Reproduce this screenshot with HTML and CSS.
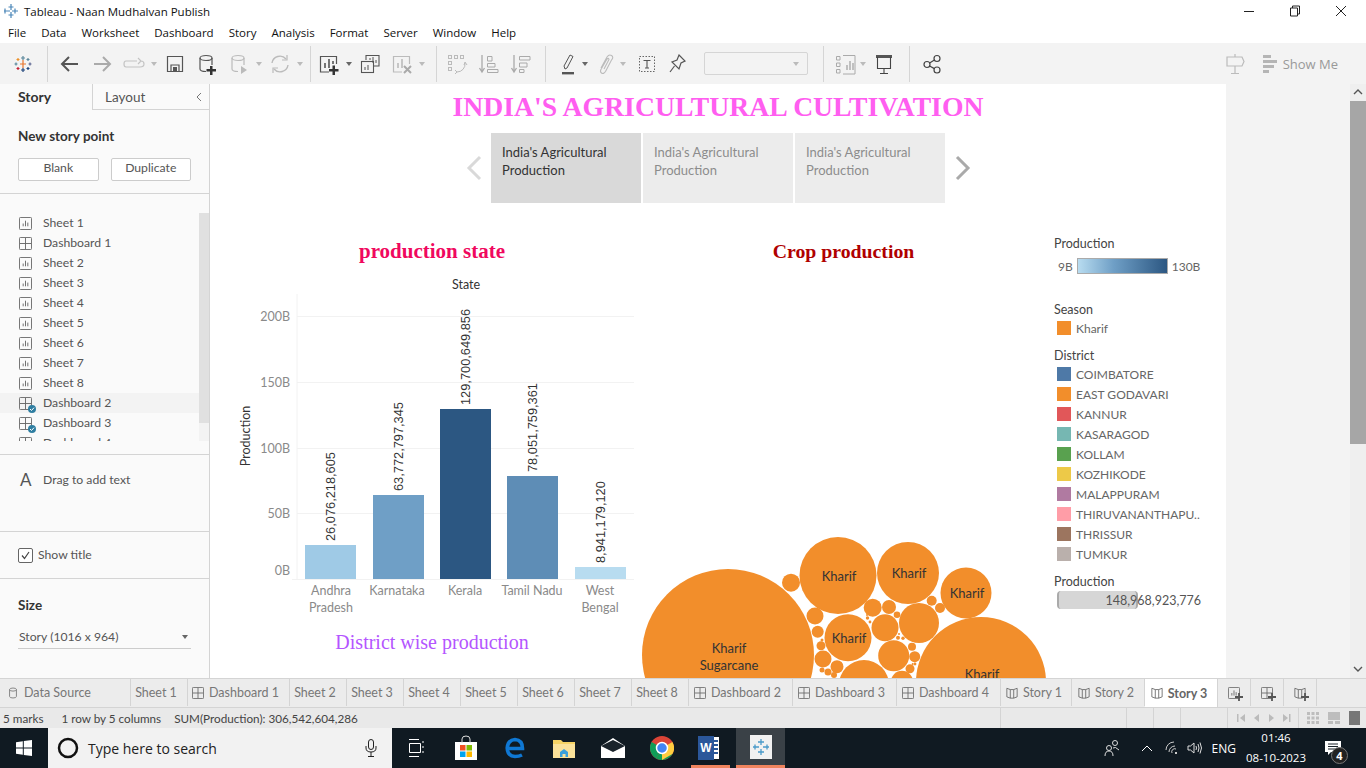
FILE: index.html
```html
<!DOCTYPE html>
<html lang="en">
<head>
  <meta charset="UTF-8">
  <title>Tableau - Naan Mudhalvan Publish</title>
  <link rel="stylesheet" href="styles.css">
</head>
<body>
<svg class="defs">
  <symbol id="i-sheet" viewBox="0 0 14 14"><rect x="0.5" y="0.5" width="13" height="13" rx="1" fill="none" stroke="#666"/><path d="M4.5 10V7M7 10V4M9.5 10V6" stroke="#666" fill="none"/></symbol>
  <symbol id="i-dash" viewBox="0 0 14 14"><rect x="0.5" y="0.5" width="13" height="13" rx="1" fill="none" stroke="#666"/><path d="M7 1V13M1 7H13" stroke="#666" fill="none"/></symbol>
  <symbol id="i-story" viewBox="0 0 14 14"><path d="M1 1.5L5 3V13L1 11.5ZM13 1.5L9 3V13L13 11.5ZM5 3H9M5 13H9" fill="none" stroke="#666"/></symbol>
  <symbol id="i-check" viewBox="0 0 8 8"><circle cx="4" cy="4" r="4" fill="#2f7ea1"/><path d="M2 4L3.5 5.5L6 2.7" stroke="#fff" fill="none"/></symbol>
  <symbol id="i-caret" viewBox="0 0 10 6"><path d="M2 1H8L5 5Z"/></symbol>
  <symbol id="i-plus" viewBox="0 0 9 9"><path d="M3.5 0H5.5V3.5H9V5.5H5.5V9H3.5V5.5H0V3.5H3.5Z"/></symbol>
</svg>

<div class="titlebar">
  <svg class="app-logo" width="16" height="16" viewBox="0 0 16 16"><g stroke="#4a86b8" stroke-width="1.2"><path d="M8 1V7M5.5 4H10.5M8 9V15M5.5 12H10.5M1 8H7M2 5.5V10.5M9 8H15M12 5.5V10.5"/></g></svg>
  <span class="app-title">Tableau - Naan Mudhalvan Publish</span>
  <div class="winbtns">
    <svg width="12" height="12" viewBox="0 0 12 12"><path d="M1 6.5H11" stroke="#222"/></svg>
    <svg width="12" height="12" viewBox="0 0 12 12"><path d="M3.5 3V1H10.5V9H8.5M1.5 3H8.5V11H1.5Z" fill="none" stroke="#222"/></svg>
    <svg width="12" height="12" viewBox="0 0 12 12"><path d="M1 1L11 11M11 1L1 11" stroke="#222"/></svg>
  </div>
</div>

<div class="menubar">
  <span>File</span><span>Data</span><span>Worksheet</span><span>Dashboard</span><span>Story</span><span>Analysis</span><span>Format</span><span>Server</span><span>Window</span><span>Help</span>
</div>

<div class="toolbar">
  <div class="g-logo">
    <svg class="ic" viewBox="0 0 24 24"><g stroke-width="1.2" fill="none"><path d="M12 8V16M9 12H15" stroke="#e8762d"/><path d="M12 4V8M10 6H14" stroke="#5b879b"/><path d="M12 16V20M10 18H14" stroke="#1f447b"/><path d="M5 10.500V13.500M3.500 12H6.500" stroke="#59879b"/><path d="M19 10.500V13.500M17.500 12H20.500" stroke="#5b6591"/><path d="M7 6V9M5.500 7.500H8.500" stroke="#eb912b"/><path d="M17 6V9M15.500 7.500H18.500" stroke="#5b879b"/><path d="M7 15V18M5.500 16.500H8.500" stroke="#c72035"/><path d="M17 15V18M15.500 16.500H18.500" stroke="#1f447b"/></g></svg>
  </div>
  <div class="g-nav">
    <svg class="ic" viewBox="0 0 24 24"><path d="M20 12H5M11 5L4 12L11 19" fill="none" stroke="#555" stroke-width="2"/></svg>
    <svg class="ic dim" viewBox="0 0 24 24"><path d="M4 12H19M13 5L20 12L13 19" fill="none" stroke="#aaa" stroke-width="2"/></svg>
    <svg class="ic dim" viewBox="0 0 24 24"><path d="M15 9H4Q2 9 2 12T4 15H18Q22 15 22 12T19 9M16 6L19 9L16 12" fill="none" stroke="#c4c4c4" stroke-width="1.2"/></svg>
    <svg class="caret dim"><use href="#i-caret"/></svg>
    <svg class="ic" viewBox="0 0 24 24"><path d="M4.500 4.500H19.500V19.500H4.500ZM8 19V13H16V19" fill="none" stroke="#555" stroke-width="1.2"/><rect x="10" y="15" width="4" height="4" fill="#555"/></svg>
    <svg class="ic" viewBox="0 0 24 24"><ellipse cx="11" cy="6" rx="6" ry="2.5" fill="none" stroke="#555" stroke-width="1.2"/><path d="M5 6V17Q5 19.5 11 19.5M17 6V13" fill="none" stroke="#555" stroke-width="1.2"/><path d="M15 14H17.500V17H21V19.500H17.500V23H15V19.500H11.500V17H15Z" fill="#333"/></svg>
    <svg class="ic dim" viewBox="0 0 24 24"><ellipse cx="11" cy="6" rx="6" ry="2.5" fill="none" stroke="#bbb" stroke-width="1.2"/><path d="M5 6V17Q5 19.5 11 19.5M17 6V13" fill="none" stroke="#bbb" stroke-width="1.2"/><path d="M14 14L20 18L14 22Z" fill="#bbb"/></svg>
    <svg class="caret dim"><use href="#i-caret"/></svg>
    <svg class="ic dim" viewBox="0 0 24 24"><path d="M4 11A8 8 0 0 1 18 7M20 13A8 8 0 0 1 6 17" fill="none" stroke="#bbb" stroke-width="1.4"/><path d="M19 3V8H14M5 21V16H10" fill="none" stroke="#bbb" stroke-width="1.2"/></svg>
    <svg class="caret dim"><use href="#i-caret"/></svg>
  </div>
  <div class="g-sheet">
    <svg class="ic" viewBox="0 0 24 24"><path d="M12 20H3.500V4.500H19.500V12" fill="none" stroke="#555" stroke-width="1.2"/><path d="M8 16V11M12 16V7M16 12V9" stroke="#555" stroke-width="1.6"/><path d="M15.500 13.500H18V17H21.500V19.500H18V23H15.500V19.500H12V17H15.500Z" fill="#333"/></svg>
    <svg class="caret"><use href="#i-caret"/></svg>
    <svg class="ic" viewBox="0 0 24 24"><path d="M8 8V3.500H21V14H16" fill="none" stroke="#555" stroke-width="1.1"/><rect x="3.500" y="9.500" width="12" height="11" fill="#f3f3f3" stroke="#555" stroke-width="1.1"/><path d="M12 8V6M15 11V5M18 11V8M7 18V15M10 18V13" stroke="#555"/></svg>
    <svg class="ic dim" viewBox="0 0 24 24"><path d="M12 20H3.500V4.500H19.500V12" fill="none" stroke="#bbb" stroke-width="1.2"/><path d="M8 16V11M12 16V7" stroke="#bbb" stroke-width="1.6"/><path d="M14 14L21 21M21 14L14 21" stroke="#aaa" stroke-width="2"/></svg>
    <svg class="caret dim"><use href="#i-caret"/></svg>
  </div>
  <div class="g-sort">
    <svg class="ic dim" viewBox="0 0 24 24"><g fill="none" stroke="#bbb"><rect x="3.500" y="3.500" width="3" height="3"/><rect x="9.500" y="3.500" width="3" height="3"/><rect x="15.500" y="3.500" width="3" height="3"/><rect x="3.500" y="9.500" width="3" height="3"/><rect x="3.500" y="15.500" width="3" height="3"/><path d="M20 11A8 8 0 0 1 12 20M10 18L12 20L10 22M19 13L20 10L22 13"/></g></svg>
    <svg class="ic dim" viewBox="0 0 24 24"><path d="M5 3V19M2.500 16L5 20L7.500 16" fill="none" stroke="#aaa" stroke-width="1.3"/><path d="M10.500 4.500H15V9H10.500ZM10.500 11.500H18V15H10.500ZM10.500 17.500H21V20.500H10.500Z" fill="none" stroke="#aaa"/></svg>
    <svg class="ic dim" viewBox="0 0 24 24"><path d="M5 3V19M2.500 16L5 20L7.500 16" fill="none" stroke="#aaa" stroke-width="1.3"/><path d="M10.500 4.500H21V8H10.500ZM10.500 11H18V15H10.500ZM10.500 17.500H15V20.500H10.500Z" fill="none" stroke="#aaa"/></svg>
  </div>
  <div class="g-mark">
    <svg class="ic" viewBox="0 0 24 24"><path d="M9 17L8 14L14 3L17 4.500L11 16Z" fill="none" stroke="#555"/><rect x="6" y="20" width="12" height="2.4" fill="#555"/></svg>
    <svg class="caret"><use href="#i-caret"/></svg>
    <svg class="ic dim" viewBox="0 0 24 24"><path d="M7 16L13 5Q15 2 17.500 3.500T17.500 8L11.500 19.500Q9.500 22.500 7.500 21T7.500 16.500L13 7Q14.500 5.500 15 7.500L10 17" fill="none" stroke="#bbb" stroke-width="1.1"/></svg>
    <svg class="caret dim"><use href="#i-caret"/></svg>
    <svg class="ic ic-t" viewBox="0 0 24 24"><rect x="4.500" y="4.500" width="15" height="15" fill="none" stroke="#666" stroke-dasharray="1.5 1.5"/><path d="M8.500 8.500H15.500M12 8.500V16M10 16H14" fill="none" stroke="#555" stroke-width="1.1"/></svg>
    <svg class="ic ic-pin" viewBox="0 0 24 24"><path d="M14 3L20 9L16 11L14 17L7 10L12 8ZM9.500 14L5 20" fill="none" stroke="#555" stroke-width="1.2"/></svg>
    <div class="tb-select"><svg class="caret dim"><use href="#i-caret"/></svg></div>
  </div>
  <div class="g-show">
    <svg class="ic dim" viewBox="0 0 24 24"><path d="M9 3.500H21V22H9" fill="none" stroke="#aaa"/><path d="M13 18V13M16 18V9M19 18V11" stroke="#aaa" stroke-width="1.4"/><path d="M2.500 4.500H6V8H2.500ZM2.500 11H6V14.500H2.500ZM2.500 17.500H6V21H2.500Z" fill="none" stroke="#aaa"/></svg>
    <svg class="caret dim"><use href="#i-caret"/></svg>
    <svg class="ic" viewBox="0 0 24 24"><rect x="4" y="3" width="16" height="3" fill="#555"/><path d="M5.500 5V16.500H18.500V5M12 16.500V21.500M8 21.500H16" fill="none" stroke="#444" stroke-width="1.1"/></svg>
  </div>
  <div class="g-share">
    <svg class="ic" viewBox="0 0 24 24"><g fill="none" stroke="#444" stroke-width="1.2"><circle cx="17" cy="6.500" r="3"/><circle cx="7" cy="12.500" r="3"/><circle cx="17" cy="18" r="3"/><path d="M9.600 11L14.400 8M9.600 14L14.400 16.600"/></g></svg>
  </div>
  <div class="g-right">
    <svg class="ic" viewBox="0 0 24 24"><path d="M12 2V5M4 5H19L21 9.500L19 14H4ZM12 14V21M8 21.500H16" fill="none" stroke="#bbb" stroke-width="1.2"/></svg>
    <svg class="showme-ic" width="14" height="24" viewBox="0 0 14 24"><path d="M0 3H8V6H0ZM0 8H14V11H0ZM0 13H11V16H0ZM0 18H6V21H0Z" fill="#b5b5b5"/></svg>
    <span class="showme">Show Me</span>
  </div>
</div>

<div class="main">
  <aside class="sidebar">
    <div class="side-tabs">
      <span class="side-tab active">Story</span>
      <span class="side-tab">Layout</span>
      <svg class="collapse" width="8" height="10" viewBox="0 0 8 10"><path d="M6 1L2 5L6 9" fill="none" stroke="#777"/></svg>
    </div>
    <section class="sec-new">
      <h4>New story point</h4>
      <div class="btn-row"><span class="btn">Blank</span><span class="btn">Duplicate</span></div>
    </section>
    <section class="sec-list">
      <ul class="sheet-list">
        <li><svg><use href="#i-sheet"/></svg><span>Sheet 1</span></li>
        <li><svg><use href="#i-dash"/></svg><span>Dashboard 1</span></li>
        <li><svg><use href="#i-sheet"/></svg><span>Sheet 2</span></li>
        <li><svg><use href="#i-sheet"/></svg><span>Sheet 3</span></li>
        <li><svg><use href="#i-sheet"/></svg><span>Sheet 4</span></li>
        <li><svg><use href="#i-sheet"/></svg><span>Sheet 5</span></li>
        <li><svg><use href="#i-sheet"/></svg><span>Sheet 6</span></li>
        <li><svg><use href="#i-sheet"/></svg><span>Sheet 7</span></li>
        <li><svg><use href="#i-sheet"/></svg><span>Sheet 8</span></li>
        <li class="hover"><svg><use href="#i-dash"/></svg><svg class="badge"><use href="#i-check"/></svg><span>Dashboard 2</span></li>
        <li><svg><use href="#i-dash"/></svg><svg class="badge"><use href="#i-check"/></svg><span>Dashboard 3</span></li>
        <li><svg><use href="#i-dash"/></svg><span>Dashboard 4</span></li>
      </ul>
      <div class="list-scroll"><div class="list-thumb"></div></div>
    </section>
    <section class="sec-text"><span class="big-a">A</span>Drag to add text</section>
    <section class="sec-show"><span class="checkbox"><svg width="11" height="11" viewBox="0 0 11 11"><path d="M2 5.500L4.500 8.500L9 2" fill="none" stroke="#444" stroke-width="1.2"/></svg></span><span class="show-lbl">Show title</span></section>
    <section class="sec-size">
      <h4>Size</h4>
      <div class="size-select">Story (1016 x 964)<svg class="caret"><use href="#i-caret"/></svg></div>
    </section>
  </aside>

  <div class="canvas">
    <h1 class="story-title">INDIA'S AGRICULTURAL CULTIVATION</h1>
    <div class="story-nav">
      <svg class="nav-arrow" width="16" height="26" viewBox="0 0 16 26"><path d="M14 2L3 13L14 24" fill="none" stroke="#d9d9d9" stroke-width="3"/></svg>
      <div class="point current">India's Agricultural Production</div>
      <div class="point">India's Agricultural Production</div>
      <div class="point">India's Agricultural Production</div>
      <svg class="nav-arrow" width="16" height="26" viewBox="0 0 16 26"><path d="M2 2L13 13L2 24" fill="none" stroke="#aaa" stroke-width="3"/></svg>
    </div>
    <div class="story-body">
      <div class="col-left">
        <h2 class="head-state">production state</h2>
        <svg class="bar-chart" width="410" height="350" viewBox="230 270 410 350">
          <g stroke="#f2f2f2"><path d="M297 316.500H634M297 382.500H634M297 448.500H634M297 513.500H634M297 294V579M292 579.500H634"/></g>
          <g fill="#8a8a8a" class="axis-txt" text-anchor="end">
            <text x="290" y="321">200B</text><text x="290" y="387">150B</text><text x="290" y="453">100B</text><text x="290" y="518">50B</text><text x="290" y="575">0B</text>
          </g>
          <text class="axis-title" x="466" y="289" text-anchor="middle">State</text>
          <text class="axis-title" transform="translate(250 436) rotate(-90)" text-anchor="middle">Production</text>
          <rect x="305" y="545" width="51" height="34" fill="#9fcae6"/>
          <rect x="373" y="495" width="51" height="84" fill="#6f9fc6"/>
          <rect x="440" y="409" width="51" height="170" fill="#2c5782"/>
          <rect x="507" y="476" width="51" height="103" fill="#5e8db6"/>
          <rect x="575" y="567" width="51" height="12" fill="#b8dcf0"/>
          <g class="val-txt">
            <text transform="translate(335 541) rotate(-90)">26,076,218,605</text>
            <text transform="translate(403 491) rotate(-90)">63,772,797,345</text>
            <text transform="translate(470 405) rotate(-90)">129,700,649,856</text>
            <text transform="translate(537 472) rotate(-90)">78,051,759,361</text>
            <text transform="translate(605 563) rotate(-90)">8,941,179,120</text>
          </g>
          <g class="axis-txt" fill="#8a8a8a" text-anchor="middle">
            <text x="331" y="595">Andhra</text><text x="331" y="612">Pradesh</text>
            <text x="397" y="595">Karnataka</text>
            <text x="465" y="595">Kerala</text>
            <text x="532" y="595">Tamil Nadu</text>
            <text x="600" y="595">West</text><text x="600" y="612">Bengal</text>
          </g>
        </svg>
        <h2 class="head-district">District wise production</h2>
      </div>
      <div class="col-mid">
        <h2 class="head-crop">Crop production</h2>
        <svg class="bubbles" width="410" height="148" viewBox="640 530 410 148">
          <g fill="#f28e2b">
            <circle cx="728" cy="655" r="86"/><circle cx="838" cy="575.500" r="38.500"/><circle cx="908" cy="573" r="31"/><circle cx="966" cy="593" r="25.500"/><circle cx="981" cy="682" r="65"/>
            <circle cx="791" cy="582.700" r="9"/><circle cx="815" cy="616" r="8.500"/><circle cx="817.700" cy="631.700" r="6"/><circle cx="848" cy="637.700" r="23.500"/><circle cx="872.700" cy="607.700" r="9"/><circle cx="889" cy="607" r="7"/><circle cx="897" cy="614.700" r="3.300"/><circle cx="885" cy="627.700" r="13.500"/><circle cx="919" cy="623" r="20"/><circle cx="931.700" cy="600.700" r="5"/><circle cx="940" cy="608" r="5"/><circle cx="893.700" cy="655.700" r="15.500"/><circle cx="912" cy="646.700" r="4"/><circle cx="914.700" cy="656.700" r="5.500"/><circle cx="910" cy="668.700" r="4.500"/><circle cx="821" cy="645.700" r="4.500"/><circle cx="823" cy="659" r="8.500"/><circle cx="837" cy="666.700" r="6.500"/><circle cx="828" cy="672" r="3.500"/><circle cx="822" cy="670" r="2.500"/><circle cx="864" cy="685" r="25"/><circle cx="902" cy="681.700" r="11"/><circle cx="834" cy="675" r="3"/>
            <circle cx="867.500" cy="618" r="1.700"/><circle cx="870" cy="622" r="1.400"/><circle cx="867" cy="615" r="1"/><circle cx="898" cy="637.700" r="2"/><circle cx="903" cy="638.300" r="1.700"/><circle cx="899" cy="634" r="1"/><circle cx="915" cy="664" r="1.400"/><circle cx="912.700" cy="664" r="1"/><circle cx="822" cy="640" r="1.500"/>
          </g>
          <g class="bubble-txt" text-anchor="middle">
            <text x="729" y="653">Kharif</text><text x="729" y="670">Sugarcane</text>
            <text x="839" y="581">Kharif</text><text x="909" y="578">Kharif</text><text x="967" y="598">Kharif</text><text x="849" y="643">Kharif</text><text x="982" y="679">Kharif</text>
          </g>
        </svg>
      </div>
      <div class="legends">
        <h5>Production</h5>
        <div class="ramp-row"><span class="ramp-lo">9B</span><span class="ramp"></span><span>130B</span></div>
        <h5 class="leg-season">Season</h5>
        <div class="leg-item"><i class="c-orange"></i>Kharif</div>
        <h5 class="leg-district">District</h5>
        <div class="leg-item"><i class="c-blue"></i>COIMBATORE</div>
        <div class="leg-item"><i class="c-orange"></i>EAST GODAVARI</div>
        <div class="leg-item"><i class="c-red"></i>KANNUR</div>
        <div class="leg-item"><i class="c-teal"></i>KASARAGOD</div>
        <div class="leg-item"><i class="c-green"></i>KOLLAM</div>
        <div class="leg-item"><i class="c-yellow"></i>KOZHIKODE</div>
        <div class="leg-item"><i class="c-purple"></i>MALAPPURAM</div>
        <div class="leg-item"><i class="c-pink"></i>THIRUVANANTHAPU..</div>
        <div class="leg-item"><i class="c-brown"></i>THRISSUR</div>
        <div class="leg-item"><i class="c-grey"></i>TUMKUR</div>
        <h5 class="leg-prod">Production</h5>
        <div class="size-bar"><span class="size-fill"></span><span class="size-val">148,968,923,776</span></div>
      </div>
    </div>
  </div>

  <div class="gutter"></div>
  <div class="vscroll">
    <svg width="16" height="16" viewBox="0 0 16 16"><path d="M4 10L8 6L12 10" fill="none" stroke="#555" stroke-width="1.4"/></svg>
    <div class="vthumb"></div>
    <svg class="vdown" width="16" height="16" viewBox="0 0 16 16"><path d="M4 6L8 10L12 6" fill="none" stroke="#555" stroke-width="1.4"/></svg>
  </div>
</div>

<div class="tabs">
  <span class="tab t-source"><svg viewBox="0 0 14 14"><ellipse cx="7" cy="3" rx="4" ry="1.8" fill="none" stroke="#777"/><path d="M3 3V11Q3 12.800 7 12.800T11 11V3" fill="none" stroke="#777"/></svg>Data Source</span>
  <span class="tab t-57">Sheet 1</span>
  <span class="tab t-dash t-d1"><svg><use href="#i-dash"/></svg>Dashboard 1</span>
  <span class="tab t-57">Sheet 2</span>
  <span class="tab t-57">Sheet 3</span>
  <span class="tab t-57">Sheet 4</span>
  <span class="tab t-57">Sheet 5</span>
  <span class="tab t-57">Sheet 6</span>
  <span class="tab t-57">Sheet 7</span>
  <span class="tab t-57">Sheet 8</span>
  <span class="tab t-dash"><svg><use href="#i-dash"/></svg>Dashboard 2</span>
  <span class="tab t-dash"><svg><use href="#i-dash"/></svg>Dashboard 3</span>
  <span class="tab t-dash"><svg><use href="#i-dash"/></svg>Dashboard 4</span>
  <span class="tab t-story"><svg><use href="#i-story"/></svg>Story 1</span>
  <span class="tab t-cur-b"><svg><use href="#i-story"/></svg>Story 2</span>
  <span class="tab t-cur"><svg><use href="#i-story"/></svg>Story 3</span>
  <span class="tab t-add"><svg><use href="#i-sheet"/></svg><svg class="add-plus"><use href="#i-plus"/></svg></span>
  <span class="tab t-add"><svg><use href="#i-dash"/></svg><svg class="add-plus"><use href="#i-plus"/></svg></span>
  <span class="tab t-add"><svg><use href="#i-story"/></svg><svg class="add-plus"><use href="#i-plus"/></svg></span>
</div>

<div class="status">
  <span class="st-marks">5 marks</span><span class="st-rows">1 row by 5 columns</span><span class="st-sum">SUM(Production): 306,542,604,286</span>
  <div class="st-cells">
    <span class="cell w126"></span><span class="cell w27"></span><span class="cell w27"></span><span class="cell w47"></span>
    <span class="cell st-pager">
      <svg width="60" height="12" viewBox="0 0 60 12"><g fill="#bbb"><path d="M3 2H4.500V10H3ZM11 2V10L6 6ZM25 2V10L20 6ZM35 2L40 6L35 10ZM49 2L54 6L49 10ZM55 2H56.500V10H55Z"/></g></svg>
    </span>
    <span class="st-views">
      <svg width="12" height="12" viewBox="0 0 12 12"><path d="M0 0H3V3H0ZM4.500 0H7.500V3H4.500ZM9 0H12V3H9ZM0 4.500H3V7.500H0ZM4.500 4.500H7.500V7.500H4.500ZM9 4.500H12V7.500H9ZM0 9H3V12H0ZM4.500 9H7.500V12H4.500ZM9 9H12V12H9Z" fill="#bdbdbd"/></svg>
      <svg width="12" height="12" viewBox="0 0 12 12"><path d="M0 0H12V8H0ZM0 9H5V12H0ZM7 9H12V12H7Z" fill="#bdbdbd"/></svg>
      <svg width="12" height="14" viewBox="0 0 12 14"><rect width="11" height="14" fill="#777"/></svg>
    </span>
  </div>
</div>

<div class="taskbar">
  <svg class="tk-win" width="16" height="16" viewBox="0 0 16 16"><path d="M0 2.200L6.800 1.200V7.500H0ZM7.800 1L16 0V7.500H7.800ZM0 8.500H6.800V14.800L0 13.800ZM7.800 8.500H16V16L7.800 15Z" fill="#fff"/></svg>
  <div class="search">
    <svg class="cortana" width="22" height="22" viewBox="0 0 22 22"><circle cx="11" cy="11" r="9" fill="none" stroke="#111" stroke-width="2.500"/></svg>
    <span class="search-txt">Type here to search</span>
    <svg class="mic" width="12" height="18" viewBox="0 0 12 18"><rect x="3.500" y="0.500" width="5" height="10" rx="2.500" fill="none" stroke="#222"/><path d="M1 7V9Q1 13 6 13T11 9V7M6 13V17M3 17.500H9" fill="none" stroke="#222"/></svg>
  </div>
  <div class="tk-icons">
    <span class="tk-slot"><svg width="16" height="18" viewBox="0 0 16 18"><path d="M0 .5H10M0 17.500H10M.5 4.500H11.500V13.500H.5ZM14 2V4M14 7V9M14 12V14" fill="none" stroke="#fff"/></svg></span>
    <span class="tk-slot"><svg width="24" height="26" viewBox="0 0 24 26"><path d="M1 7H23V25H1Z" fill="#fff"/><path d="M8 8V4Q8 1 12 1T16 4V8" fill="none" stroke="#ddd"/><rect x="6" y="10" width="5.500" height="5.500" fill="#f25022"/><rect x="12.500" y="10" width="5.500" height="5.500" fill="#7fba00"/><rect x="6" y="16.500" width="5.500" height="5.500" fill="#00a4ef"/><rect x="12.500" y="16.500" width="5.500" height="5.500" fill="#ffb900"/></svg></span>
    <span class="tk-slot"><svg width="20" height="22" viewBox="0 0 20 22"><path d="M4 11.500H17.500Q17.500 3 10 2.500Q3 3 2.200 11Q2.500 19 10 19.500Q14 19.500 17 18" fill="none" stroke="#0f78d4" stroke-width="3.600"/></svg></span>
    <span class="tk-slot"><svg width="22" height="20" viewBox="0 0 22 20"><path d="M0 2H8L10 4H22V20H0Z" fill="#f6d365"/><path d="M0 6H22V20H0Z" fill="#fbe29a"/><path d="M7 19V14L11 11L15 14V19H12.500V16H9.500V19Z" fill="#3aa0db"/></svg></span>
    <span class="tk-slot"><svg width="24" height="20" viewBox="0 0 24 20"><path d="M0 8L12 0L24 8V20H0Z" fill="#fff"/><path d="M0 8L12 14L24 8L12 2Z" fill="#1a232b"/></svg></span>
    <span class="tk-slot"><svg width="24" height="24" viewBox="0 0 24 24"><circle cx="12" cy="12" r="12" fill="#db4437"/><path d="M12 12L22.400 18A12 12 0 0 1 6 22.400Z" fill="#0f9d58"/><path d="M12 12L6 22.400A12 12 0 0 1 1.600 6Z" fill="#0f9d58"/><path d="M12 12L22.400 6A12 12 0 0 1 22.400 18L12 24Z" fill="#ffcd40"/><circle cx="12" cy="12" r="5.500" fill="#4285f4" stroke="#fff" stroke-width="1.500"/></svg></span>
    <span class="tk-slot open-a">
      <span class="word-doc"><svg width="10" height="20" viewBox="0 0 10 20"><path d="M2 4H9M2 8H9M2 12H9M2 16H9" stroke="#2b579a" stroke-width="2"/></svg></span>
      <span class="word-ic">W</span>
    </span>
    <span class="tk-slot open-b"><svg class="tab-logo" width="22" height="24" viewBox="0 0 22 24"><rect width="22" height="24" fill="#f1f1f1"/><g stroke="#4a9ac9" stroke-width="1.300"><path d="M11 4V10M8 7H14M11 14V20M8 17H14M3 12H9M5 9.500V14.500M13 12H19M17 9.500V14.500"/></g></svg></span>
  </div>
  <div class="tray">
    <svg class="t-people" width="16" height="18" viewBox="0 0 16 18"><circle cx="5" cy="9" r="2.500" fill="none" stroke="#ddd"/><circle cx="11" cy="4" r="2.500" fill="none" stroke="#ddd"/><path d="M1 17Q1 12 5 12T9 17M9 9Q11 7 15 11" fill="none" stroke="#ddd"/></svg>
    <svg class="t-chev" width="12" height="8" viewBox="0 0 12 8"><path d="M1 7L6 2L11 7" fill="none" stroke="#fff"/></svg>
    <svg class="t-net" width="14" height="14" viewBox="0 0 14 14"><path d="M1 9A8 8 0 0 1 9 1M4 11A6 6 0 0 1 10 5M7 12A3 3 0 0 1 11 8" fill="none" stroke="#ccc"/><rect x="10" y="11" width="2" height="2" fill="#ccc"/></svg>
    <svg class="t-vol" width="16" height="14" viewBox="0 0 16 14"><path d="M1 5H3.500L7 2V12L3.500 9H1ZM9 5Q10 7 9 9M11 3Q13 7 11 11M13 1.500Q16 7 13 12.500" fill="none" stroke="#ddd"/></svg>
    <span class="t-eng">ENG</span>
    <span class="t-clock"><span>01:46</span><span>08-10-2023</span></span>
    <span class="t-note"><svg width="16" height="15" viewBox="0 0 16 15"><path d="M0 0H16V11H6L3 14V11H0Z" fill="#fff"/><path d="M3 3H13M3 5.500H13M3 8H10" stroke="#1a232b"/></svg><b class="note-badge">4</b></span>
  </div>
</div>
</body>
</html>
```

FILE: styles.css
```css
* {
  box-sizing: border-box;
}
html, body {
  margin: 0;
  width: 1366px;
  height: 768px;
  overflow: hidden;
  background: #fff;
  font-family: "Open Sans", sans-serif;
  font-size: 11.5px;
  color: #222;
}
.defs {
  display: none;
}
h1, h2, h4, h5, ul {
  margin: 0;
  padding: 0;
}

/* window chrome */
.titlebar {
  height: 22px;
  display: flex;
  align-items: center;
  padding-left: 3px;
}
.app-title {
  margin-left: 5px;
  color: #111;
}
.winbtns {
  margin-left: auto;
  display: flex;
  gap: 34px;
  padding-right: 19px;
}
.menubar {
  height: 21px;
  display: flex;
  align-items: center;
  padding-left: 8px;
  color: #111;
}
.menubar span {
  margin-right: 15px;
}
.toolbar {
  height: 41px;
  background: #f3f3f3;
  display: flex;
  align-items: center;
}
.toolbar > div {
  height: 36px;
  display: flex;
  align-items: center;
  flex: none;
}
.ic {
  width: 24px;
  height: 24px;
  margin-left: 8px;
  flex: none;
}
.caret {
  width: 10px;
  height: 6px;
  margin: 0 -4px 0 3px;
  flex: none;
  fill: #666;
}
.caret.dim {
  fill: #bbb;
}
.g-logo, .g-nav, .g-sheet, .g-sort, .g-mark, .g-show {
  border-right: 1px solid #d5d5d5;
}
.g-logo {
  width: 48px;
  padding-left: 3px;
}
.g-nav {
  width: 263px;
  padding-left: 2px;
}
.g-sheet {
  width: 126px;
}
.g-sheet .ic:first-child {
  margin-left: 6px;
}
.g-sort {
  width: 109px;
}
.g-mark {
  width: 278px;
  padding-left: 2px;
}
.g-mark .caret, .g-show .caret {
  margin-left: 0;
}
.g-mark .ic-t {
  margin-left: 11px;
}
.g-mark .ic-pin {
  margin-left: 6px;
}
.tb-select {
  width: 104px;
  height: 23px;
  margin-left: 15px;
  border: 1px solid #d5d5d5;
  border-radius: 2px;
  display: flex;
  align-items: center;
  justify-content: flex-end;
  padding-right: 6px;
}
.tb-select .caret {
  margin: 0;
}
.g-show {
  width: 86px;
  padding-left: 2px;
}
.g-share {
  padding-left: 2px;
}
.g-right {
  margin-left: auto;
  padding-right: 28px;
}
.showme-ic {
  margin-left: 16px;
}
.showme {
  margin-left: 6px;
  font-size: 13px;
  color: #999;
}

/* main area */
.main {
  height: 594px;
  display: flex;
}
.sidebar {
  width: 210px;
  flex: none;
  background: #fafafa;
  border-right: 1px solid #d4d4d4;
  font-family: Lato, sans-serif;
  color: #555;
  font-size: 12.2px;
}
.side-tabs {
  height: 26px;
  display: flex;
  align-items: center;
  position: relative;
}
.side-tab {
  height: 26px;
  line-height: 26px;
  font-size: 13.5px;
}
.side-tab.active {
  width: 92px;
  padding-left: 18px;
  font-size: 14px;
  font-weight: 700;
  color: #333;
}
.side-tab:not(.active) {
  flex: 1;
  padding-left: 12px;
  border-left: 1px solid #d4d4d4;
  border-bottom: 1px solid #d4d4d4;
}
.collapse {
  position: absolute;
  right: 6px;
  top: 8px;
}
.sec-new {
  height: 84px;
  padding: 18px 18px 0;
  border-bottom: 1px solid #d4d4d4;
}
.sec-new h4, .sec-size h4 {
  font-size: 13.5px;
  font-weight: 700;
  color: #333;
  line-height: 17px;
}
.btn-row {
  display: flex;
  gap: 12px;
  margin-top: 13px;
}
.btn {
  width: 81px;
  height: 23px;
  line-height: 17px;
  text-align: center;
  border: 1px solid #ccc;
  border-radius: 2px;
  background: #fff;
}
.sec-list {
  height: 261px;
  padding-top: 19px;
  border-bottom: 1px solid #d4d4d4;
  display: flex;
}
.sheet-list {
  list-style: none;
  width: 199px;
  height: 228px;
  overflow: hidden;
}
.sheet-list li {
  height: 20px;
  display: flex;
  align-items: center;
  padding-left: 19px;
  position: relative;
}
.sheet-list li span {
  margin-top: -2px;
}
.sheet-list li > svg:first-child {
  width: 13px;
  height: 13px;
  margin-right: 11px;
}
.sheet-list .hover {
  background: #f3f3f3;
}
.badge {
  position: absolute;
  left: 28px;
  top: 12px;
  width: 8px;
  height: 8px;
}
.list-scroll {
  width: 10px;
  height: 228px;
  background: #f3f3f3;
}
.list-thumb {
  height: 210px;
  background: #e0e0e0;
}
.sec-text {
  height: 77px;
  padding: 16px 0 0 20px;
  border-bottom: 1px solid #d4d4d4;
  display: flex;
  align-items: flex-start;
  line-height: 18px;
}
.big-a {
  width: 23px;
  font-size: 17px;
  line-height: 18px;
}
.sec-show {
  height: 47px;
  padding-left: 18px;
  border-bottom: 1px solid #d4d4d4;
  display: flex;
  align-items: center;
  gap: 5px;
}
.show-lbl {
  margin-top: -2px;
}
.checkbox {
  width: 15px;
  height: 15px;
  border: 1px solid #666;
  border-radius: 2px;
  background: #fff;
  display: flex;
  align-items: center;
  justify-content: center;
}
.sec-size {
  padding: 18px 18px 0;
}
.size-select {
  margin-top: 11px;
  width: 173px;
  height: 24px;
  padding: 0 1px;
  border-bottom: 1px solid #ccc;
  display: flex;
  align-items: center;
  justify-content: space-between;
}
.size-select .caret {
  margin: 0;
}

/* story canvas */
.canvas {
  width: 1016px;
  flex: none;
  overflow: hidden;
  background: #fff;
  font-family: Lato, sans-serif;
}
.story-title {
  height: 49px;
  line-height: 46px;
  text-align: center;
  font-family: "Liberation Serif", serif;
  font-size: 27.7px;
  font-weight: 700;
  color: #ff5ef0;
}
.story-nav {
  height: 70px;
  display: flex;
  align-items: center;
  padding-left: 256px;
}
.nav-arrow {
  flex: none;
}
.nav-arrow:first-child {
  margin-right: 9px;
}
.nav-arrow:last-child {
  margin-left: 8px;
}
.point {
  width: 150px;
  height: 70px;
  margin-right: 2px;
  padding: 10px 20px 0 11px;
  background: #ececec;
  color: #8c8c8c;
  font-size: 13px;
  line-height: 18px;
}
.point.current {
  background: #d9d9d9;
  color: #333;
}
.story-body {
  display: flex;
  margin-top: 37px;
}
.col-left {
  width: 430px;
  flex: none;
  padding-left: 20px;
}
.bar-chart {
  display: block;
  margin-top: 7px;
}
.col-left h2, .col-mid h2 {
  font-family: "Liberation Serif", serif;
  font-size: 20px;
  line-height: 23px;
  text-align: center;
}
.col-left .head-state {
  font-size: 21px;
  color: #f0085e;
  padding-right: 6px;
}
.col-left .head-district {
  font-weight: 400;
  color: #b455ff;
  margin-top: 11px;
  padding-right: 6px;
}
.col-mid {
  width: 410px;
  flex: none;
}
.col-mid .head-crop {
  font-size: 19.8px;
  line-height: 22px;
  padding-right: 3px;
  color: #b00000;
}
.bubbles {
  display: block;
  margin-top: 268px;
}
.axis-txt {
  font-size: 12.5px;
}
.axis-title {
  font-size: 12.5px;
  fill: #333;
}
.val-txt {
  font-family: "Liberation Sans", sans-serif;
  font-size: 12.8px;
  fill: #333;
}
.bubble-txt {
  font-size: 13px;
  fill: #333;
}
.legends {
  width: 160px;
  padding-left: 4px;
  margin-top: -4px;
  font-size: 12px;
  color: #666;
}
.legends h5 {
  font-size: 12.5px;
  font-weight: 400;
  color: #444;
  line-height: 16px;
}
.ramp-row {
  display: flex;
  align-items: center;
  gap: 4px;
  height: 16px;
  margin-top: 6px;
}
.ramp-lo {
  margin-left: 4px;
}
.ramp {
  width: 91px;
  height: 16px;
  border: 1px solid #aaa;
  background: linear-gradient(to right, #b8dcf0, #6f9fc6 40%, #2c5782);
}
.leg-season {
  margin-top: 28px;
}
.leg-district {
  margin-top: 10px;
}
.leg-item {
  height: 20px;
  display: flex;
  align-items: center;
  gap: 5px;
  padding-left: 3px;
  white-space: nowrap;
}
.leg-item i {
  width: 14px;
  height: 14px;
  flex: none;
}
.c-blue { background: #4e79a7; }
.c-orange { background: #f28e2b; }
.c-red { background: #e15759; }
.c-teal { background: #76b7b2; }
.c-green { background: #59a14f; }
.c-yellow { background: #edc948; }
.c-purple { background: #b07aa1; }
.c-pink { background: #ff9da7; }
.c-brown { background: #9c755f; }
.c-grey { background: #bab0ac; }
.legends .leg-prod {
  margin-top: 10px;
}
.size-bar {
  position: relative;
  height: 18px;
  margin: 1px 0 0 3px;
  width: 144px;
  display: flex;
  align-items: center;
  justify-content: flex-end;
}
.size-fill {
  position: absolute;
  left: 0;
  top: 0;
  width: 81px;
  height: 18px;
  background: #d6d6d6;
  border-left: 2px solid #aaa;
  border-right: 2px solid #aaa;
  border-radius: 4px;
}
.size-val {
  position: relative;
  font-size: 12.5px;
  color: #555;
}
.gutter {
  width: 124px;
  flex: none;
  background: #f3f3f3;
}
.vscroll {
  width: 16px;
  flex: none;
  background: #efefef;
  display: flex;
  flex-direction: column;
}
.vthumb {
  height: 343px;
  margin-top: 1px;
  background: #a6a6a6;
}
.vdown {
  margin-top: auto;
  margin-bottom: 1px;
}

/* sheet tabs */
.tabs {
  height: 30px;
  display: flex;
  background: #ececec;
  border-top: 1px solid #d4d4d4;
  border-bottom: 1px solid #d4d4d4;
  font-family: Lato, sans-serif;
  font-size: 12.5px;
  color: #777;
}
.tab {
  height: 27px;
  display: flex;
  align-items: center;
  justify-content: center;
  gap: 5px;
  padding-right: 6px;
  border-right: 1px solid #d4d4d4;
  flex: none;
  position: relative;
}
.tab svg {
  width: 12px;
  height: 12px;
}
.t-source {
  width: 131px;
  justify-content: flex-start;
  padding: 0 0 0 7px;
}
.t-57 {
  width: 57px;
}
.t-dash {
  width: 104px;
}
.t-d1 {
  width: 102px;
}
.t-story {
  width: 71px;
  padding-right: 4px;
}
.t-cur-b {
  width: 73px;
  padding-right: 4px;
}
.t-cur {
  width: 73px;
  height: 28px;
  padding-right: 4px;
  background: #fff;
  font-weight: 700;
  color: #666;
}
.t-add {
  width: 33px;
  padding-right: 0;
}
.tab .add-plus {
  position: absolute;
  right: 7px;
  bottom: 5px;
  width: 8px;
  height: 8px;
  fill: #555;
}

/* status bar */
.status {
  height: 20px;
  display: flex;
  align-items: center;
  background: #e9e9e9;
  font-family: Lato, sans-serif;
  font-size: 11.7px;
  color: #444;
  padding-left: 3px;
}
.st-rows {
  margin-left: 18px;
}
.st-sum {
  margin-left: 13px;
}
.st-cells {
  margin-left: auto;
  display: flex;
  height: 20px;
}
.cell {
  border-left: 1px solid #d4d4d4;
  height: 20px;
  flex: none;
}
.w126 { width: 126px; }
.w27 { width: 27px; }
.w47 { width: 47px; }
.st-pager {
  width: 71px;
  display: flex;
  align-items: center;
  padding-left: 6px;
}
.st-views {
  width: 68px;
  border-left: 1px solid #d4d4d4;
  display: flex;
  align-items: center;
  gap: 9px;
  padding-left: 8px;
}

/* windows taskbar */
.taskbar {
  height: 40px;
  background: #101a22;
  display: flex;
  align-items: center;
  color: #fff;
}
.tk-win {
  margin: 0 16px;
  flex: none;
}
.search {
  width: 344px;
  height: 40px;
  background: #f2f2f2;
  display: flex;
  align-items: center;
  flex: none;
  padding-left: 9px;
  color: #222;
}
.search-txt {
  margin-left: 9px;
  font-family: "Open Sans", sans-serif;
  font-size: 14px;
}
.mic {
  margin-left: auto;
  margin-right: 15px;
}
.tk-icons {
  display: flex;
  margin-left: 0;
}
.tk-slot {
  width: 49px;
  height: 40px;
  display: flex;
  align-items: center;
  justify-content: center;
  flex: none;
  position: relative;
}
.word-doc {
  position: absolute;
  left: 14px;
  top: 9px;
  width: 14px;
  height: 22px;
  background: #fff;
  display: flex;
  justify-content: flex-end;
}
.word-ic {
  position: absolute;
  left: 7px;
  top: 8px;
  width: 16px;
  height: 24px;
  background: #2b579a;
  color: #fff;
  font: 700 12px "Liberation Sans", sans-serif;
  display: flex;
  align-items: center;
  justify-content: center;
}
.open-a {
  border-bottom: 3px solid #f0845e;
  width: 39px;
  margin: 0 6px 0 5px;
}
.open-b {
  background: #3a4147;
  border-bottom: 3px solid #f0845e;
}
.tray {
  margin-left: auto;
  display: flex;
  align-items: center;
  padding-right: 25px;
}
.t-people {
  margin-right: 21px;
}
.t-chev {
  margin-right: 12px;
}
.t-net {
  margin-right: 8px;
}
.t-vol {
  margin-right: 9px;
}
.t-eng {
  font-size: 12px;
  margin-right: 10px;
}
.t-clock {
  width: 60px;
  display: flex;
  flex-direction: column;
  align-items: center;
  white-space: nowrap;
  font-size: 11.5px;
  line-height: 20px;
  margin-right: 19px;
}
.t-note {
  position: relative;
  display: flex;
}
.note-badge {
  position: absolute;
  right: -7px;
  top: 6px;
  width: 17px;
  height: 17px;
  border-radius: 50%;
  background: #222;
  border: 1px solid #777;
  font-size: 11px;
  font-weight: 700;
  line-height: 15px;
  text-align: center;
}
```
